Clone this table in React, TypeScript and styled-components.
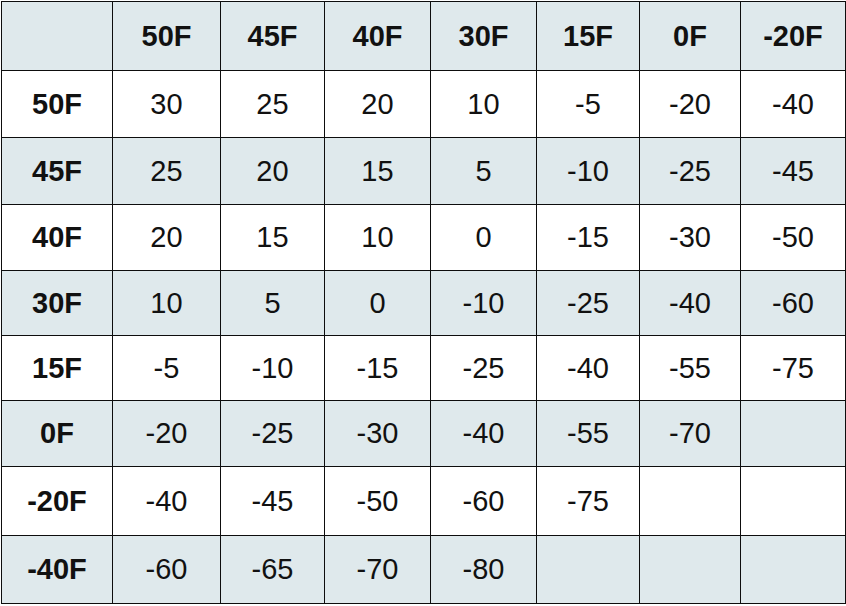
import React from "react";
import styled, { createGlobalStyle } from "styled-components";

const Global = createGlobalStyle`
  html, body { margin: 0; padding: 0; background: #ffffff; }
  body { font-family: "Liberation Sans", Arial, sans-serif; }
`;

const Grid = styled.div`
  display: grid;
  grid-template-columns: 110px 107px 103px 105px 105px 102px 100px 104px;
  grid-template-rows: 68px 66px 66px 65px 64px 64px 65px 68px 67px;
  gap: 1px;
  padding: 1px;
  background: #0d0d0d;
  width: max-content;
  margin: 1px 0 0 1px;
`;

const Cell = styled.div<{ $shaded: boolean; $bold: boolean }>`
  display: flex;
  align-items: center;
  justify-content: center;
  background: ${(p) => (p.$shaded ? "#dfe9ec" : "#ffffff")};
  color: #111111;
  font-size: 29px;
  font-weight: ${(p) => (p.$bold ? 700 : 400)};
  line-height: 1;
`;

const headers = ["50F", "45F", "40F", "30F", "15F", "0F", "-20F"];
const rows: [string, string[]][] = [
  ["50F", ["30", "25", "20", "10", "-5", "-20", "-40"]],
  ["45F", ["25", "20", "15", "5", "-10", "-25", "-45"]],
  ["40F", ["20", "15", "10", "0", "-15", "-30", "-50"]],
  ["30F", ["10", "5", "0", "-10", "-25", "-40", "-60"]],
  ["15F", ["-5", "-10", "-15", "-25", "-40", "-55", "-75"]],
  ["0F", ["-20", "-25", "-30", "-40", "-55", "-70", ""]],
  ["-20F", ["-40", "-45", "-50", "-60", "-75", "", ""]],
  ["-40F", ["-60", "-65", "-70", "-80", "", "", ""]],
];

export default function App() {
  return (
    <>
      <Global />
      <Grid>
        <Cell $shaded $bold />
        {headers.map((h) => (
          <Cell key={h} $shaded $bold>
            {h}
          </Cell>
        ))}
        {rows.map(([label, vals], i) => {
          const shaded = i % 2 === 1;
          return (
            <React.Fragment key={label}>
              <Cell $shaded={shaded} $bold>
                {label}
              </Cell>
              {vals.map((v, j) => (
                <Cell key={j} $shaded={shaded} $bold={false}>
                  {v}
                </Cell>
              ))}
            </React.Fragment>
          );
        })}
      </Grid>
    </>
  );
}
